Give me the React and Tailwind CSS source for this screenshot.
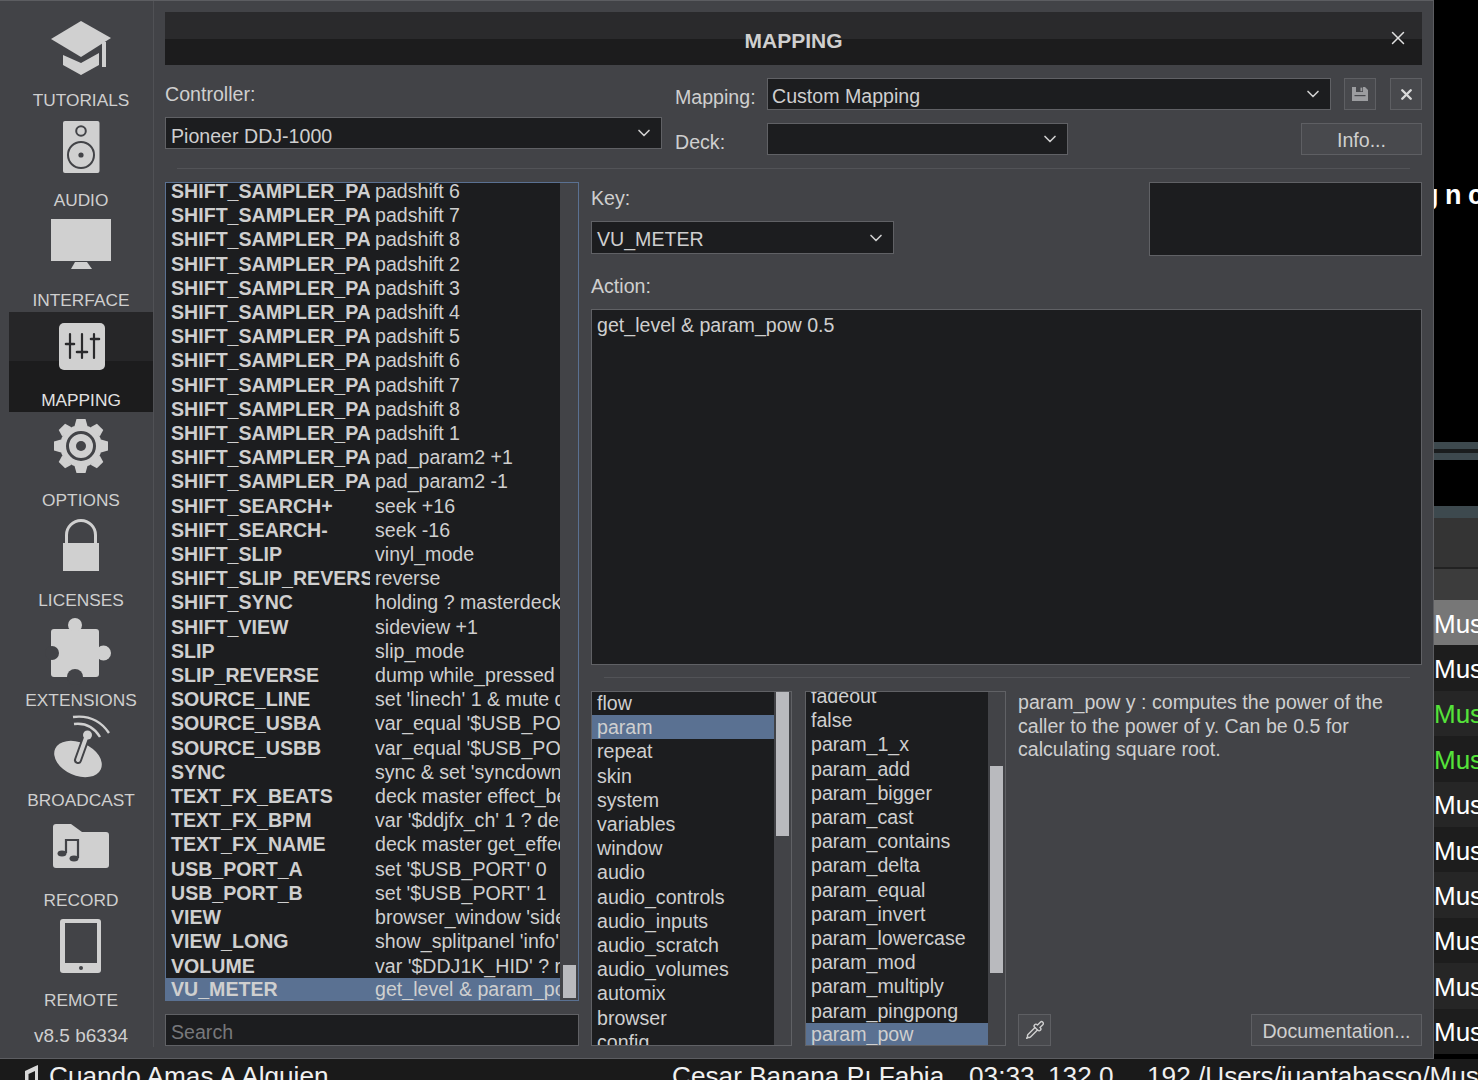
import { ChevronDown, X, Pipette } from "lucide-react";

const FONT = "font-['Liberation_Sans',Arial,sans-serif]";

const mappingRows = [
  ["SHIFT_SAMPLER_PAD", "padshift 6"],
  ["SHIFT_SAMPLER_PAD", "padshift 7"],
  ["SHIFT_SAMPLER_PAD", "padshift 8"],
  ["SHIFT_SAMPLER_PAD", "padshift 2"],
  ["SHIFT_SAMPLER_PAD", "padshift 3"],
  ["SHIFT_SAMPLER_PAD", "padshift 4"],
  ["SHIFT_SAMPLER_PAD", "padshift 5"],
  ["SHIFT_SAMPLER_PAD", "padshift 6"],
  ["SHIFT_SAMPLER_PAD", "padshift 7"],
  ["SHIFT_SAMPLER_PAD", "padshift 8"],
  ["SHIFT_SAMPLER_PAD", "padshift 1"],
  ["SHIFT_SAMPLER_PAD", "pad_param2 +1"],
  ["SHIFT_SAMPLER_PAD", "pad_param2 -1"],
  ["SHIFT_SEARCH+", "seek +16"],
  ["SHIFT_SEARCH-", "seek -16"],
  ["SHIFT_SLIP", "vinyl_mode"],
  ["SHIFT_SLIP_REVERSE", "reverse"],
  ["SHIFT_SYNC", "holding ? masterdeck"],
  ["SHIFT_VIEW", "sideview +1"],
  ["SLIP", "slip_mode"],
  ["SLIP_REVERSE", "dump while_pressed"],
  ["SOURCE_LINE", "set 'linech' 1 & mute deck"],
  ["SOURCE_USBA", "var_equal '$USB_PORT'"],
  ["SOURCE_USBB", "var_equal '$USB_PORT'"],
  ["SYNC", "sync & set 'syncdown'"],
  ["TEXT_FX_BEATS", "deck master effect_beats"],
  ["TEXT_FX_BPM", "var '$ddjfx_ch' 1 ? deck"],
  ["TEXT_FX_NAME", "deck master get_effect"],
  ["USB_PORT_A", "set '$USB_PORT' 0"],
  ["USB_PORT_B", "set '$USB_PORT' 1"],
  ["VIEW", "browser_window 'sideview'"],
  ["VIEW_LONG", "show_splitpanel 'info'"],
  ["VOLUME", "var '$DDJ1K_HID' ? rest"],
  ["VU_METER", "get_level & param_pow 0.5"],
];

const categories = ["flow", "param", "repeat", "skin", "system", "variables", "window", "audio", "audio_controls", "audio_inputs", "audio_scratch", "audio_volumes", "automix", "browser", "config"];
const verbs = ["fadeout", "false", "param_1_x", "param_add", "param_bigger", "param_cast", "param_contains", "param_delta", "param_equal", "param_invert", "param_lowercase", "param_mod", "param_multiply", "param_pingpong", "param_pow"];

const L = "#d0d0d0";
const D = "#424347";

const GearTeeth = () =>
  [0, 45, 90, 135, 180, 225, 270, 315].map((a) => (
    <path key={a} d="M74.5 14 L76.5 7 H85.5 L87.5 14 Z" fill={L} transform={`rotate(${a} 81 34)`} />
  ));

const sideItems = [
  {
    label: "TUTORIALS",
    icon: (
      <g fill={L}>
        <path d="M51 27 L81 9 L111 26 L81 45 Z" />
        <path d="M63 43 L81 51 L99 41 V53 L81 63 L63 53 Z" />
        <rect x="102" y="30" width="4" height="25" />
      </g>
    ),
  },
  {
    label: "AUDIO",
    icon: (
      <g>
        <rect x="63" y="9" width="36.5" height="52" rx="2" fill={L} />
        <circle cx="81" cy="19" r="4.8" fill="none" stroke={D} strokeWidth="2" />
        <circle cx="81" cy="43" r="13" fill="none" stroke={D} strokeWidth="2" />
        <circle cx="81" cy="43" r="2.6" fill={D} />
      </g>
    ),
  },
  {
    label: "INTERFACE",
    icon: (
      <g fill={L}>
        <rect x="51" y="7" width="60" height="42" />
        <path d="M75 50 H87 L92 57 H71 Z" />
      </g>
    ),
  },
  {
    label: "MAPPING",
    active: true,
    icon: (
      <g>
        <rect x="59" y="11" width="46" height="47" rx="5" fill={L} />
        <g stroke="#2a2a2c" strokeWidth="2.2" strokeLinecap="round">
          <path d="M70 22 V46 M82 22 V46 M94 22 V46" />
          <path d="M66 32 H74 M77 40 H87 M91 27 H99" strokeWidth="2.6" />
        </g>
      </g>
    ),
  },
  {
    label: "OPTIONS",
    icon: (
      <g>
        <GearTeeth />
        <circle cx="81" cy="34" r="21" fill={L} />
        <circle cx="81" cy="34" r="13.5" fill="none" stroke={D} strokeWidth="3" />
        <circle cx="81" cy="34" r="5" fill={D} />
      </g>
    ),
  },
  {
    label: "LICENSES",
    icon: (
      <g>
        <path d="M66.5 32 V23 a14.5 14.5 0 0 1 29 0 V32" fill="none" stroke={L} strokeWidth="3" />
        <rect x="63" y="31" width="36" height="28" fill={L} />
      </g>
    ),
  },
  {
    label: "EXTENSIONS",
    icon: (
      <g>
        <rect x="51" y="17" width="48" height="48" rx="3" fill={L} />
        <circle cx="75" cy="13" r="7" fill={L} />
        <circle cx="103.5" cy="41" r="7.5" fill={L} />
        <circle cx="52" cy="41" r="7" fill={D} />
        <circle cx="75" cy="65" r="8" fill={D} />
      </g>
    ),
  },
  {
    label: "BROADCAST",
    icon: (
      <g>
        <ellipse cx="78" cy="47" rx="25" ry="16.5" fill={L} transform="rotate(24 78 47)" />
        <path d="M78 48 L87 23" stroke={D} strokeWidth="8" strokeLinecap="round" />
        <path d="M78 48 L87 23" stroke={L} strokeWidth="4" strokeLinecap="round" />
        <circle cx="87.5" cy="23" r="4.5" fill={L} />
        <path d="M73 5 Q96 2 109 21" fill="none" stroke={L} strokeWidth="2.4" />
        <path d="M74 12 Q91 10 100 25" fill="none" stroke={L} strokeWidth="2.4" />
      </g>
    ),
  },
  {
    label: "RECORD",
    icon: (
      <g>
        <path d="M53 15 q0 -3 3 -3 H71 l11 8 H106 q3 0 3 3 V53 q0 3 -3 3 H56 q-3 0 -3 -3 Z" fill={L} />
        <path d="M66 41 V28 H78 V46" fill="none" stroke={D} strokeWidth="2.2" />
        <ellipse cx="62" cy="41.5" rx="4.5" ry="3" fill={D} />
        <ellipse cx="74" cy="46.5" rx="4.5" ry="3" fill={D} />
      </g>
    ),
  },
  {
    label: "REMOTE",
    icon: (
      <g>
        <rect x="60" y="7" width="41" height="54" rx="3" fill={L} />
        <rect x="65" y="11" width="32" height="40" fill={D} />
        <circle cx="81" cy="56" r="2" fill={D} />
      </g>
    ),
  },
];

const SideItem = ({ item }) => (
  <div className={`ml-[9px] flex h-[100px] w-[144px] shrink-0 flex-col items-center ${item.active ? "bg-[linear-gradient(#262628_0,#262628_49%,#1c1c1d_49%)]" : ""}`}>
    <svg width="144" height="76" viewBox="9 0 144 76" className="shrink-0 overflow-visible">
      {item.icon}
    </svg>
    <span className={`h-[22px] text-[17.3px] leading-[24px] ${item.active ? "text-[#e2e2e2]" : "text-[#cfcfcf]"}`}>{item.label}</span>
  </div>
);

const Select = ({ value, className = "", textClass = "pt-[5px]" }) => (
  <div className={`flex h-[32px] items-center justify-between border border-[#606165] bg-[#1c1d1f] pl-[5px] pr-[7px] text-[19.6px] text-[#cfcfcf] ${className}`}>
    <span className={textClass}>{value}</span>
    <ChevronDown size={20} strokeWidth={2} className="text-[#cfcfcf]" />
  </div>
);

const ToolButton = ({ children, className = "" }) => (
  <button className={`flex h-[32px] items-center justify-center border border-[#5e5f63] bg-[#48494d] text-[#cfcfcf] ${className}`}>{children}</button>
);

const FieldLabel = ({ children, className = "" }) => (
  <div className={`h-[32px] text-[19.6px] leading-[32px] text-[#cfcfcf] ${className}`}>{children}</div>
);

const WordList = ({ rows, selected, offset, thumb, className = "" }) => (
  <div className={`flex h-[355px] w-[201px] overflow-hidden border border-[#606165] bg-[#424347] ${className}`}>
    <div className="flex-1 overflow-hidden bg-[#1c1d1f] text-[19.6px] text-[#cfcfcf]">
      <div className={offset}>
        {rows.map((r) => (
          <div key={r} className={`h-[24.21px] pl-[5px] ${r === "param_pow" ? "leading-[22px]" : "leading-[24.21px]"} ${r === selected ? "bg-[#5a7192]" : ""}`}>
            {r}
          </div>
        ))}
      </div>
    </div>
    <div className="w-[17px] shrink-0 px-[2px]">
      <div className={`bg-[#b9babe] ${thumb}`} />
    </div>
  </div>
);

const sideRows = [
  "bg-[#777777] text-white",
  "bg-[#1d1d1d] text-white",
  "bg-[#262626] text-[#55e33a]",
  "bg-[#1d1d1d] text-[#55e33a]",
  "bg-[#262626] text-white",
  "bg-[#1d1d1d] text-white",
  "bg-[#262626] text-white",
  "bg-[#1d1d1d] text-white",
  "bg-[#262626] text-white",
  "bg-[#1d1d1d] text-white",
];

export default function App() {
  return (
    <div className={`${FONT} flex h-[1080px] w-[1478px] flex-col overflow-hidden bg-black`}>
      <div className="flex h-[1059px] shrink-0">
        {/* dialog */}
        <div className="flex h-full w-[1434px] shrink-0 border-y border-r border-[#5c5d61] bg-[#424347]">
          {/* left menu */}
          <div className="flex h-[1046px] w-[154px] shrink-0 flex-col border-r border-[#505155] pt-[11px]">
            {sideItems.map((item) => (
              <SideItem key={item.label} item={item} />
            ))}
            <div className="ml-[9px] w-[144px] pt-[13px] text-center text-[19px] leading-[22px] text-[#cfcfcf]">v8.5 b6334</div>
          </div>

          <div className="flex min-w-0 flex-1 flex-col pl-[11px] pr-[11px] pt-[11px]">
            {/* title */}
            <div className="relative flex h-[53px] shrink-0 items-center justify-center bg-[linear-gradient(#2a2a2c_0,#2a2a2c_51%,#1c1c1d_51%)] pt-[5px]">
              <span className="text-[21px] font-bold text-[#cfcfcf]">MAPPING</span>
              <X size={22} strokeWidth={1.6} className="absolute right-[13px] top-[15px] text-[#e0e0e0]" />
            </div>

            {/* controller + mapping */}
            <div className="flex gap-[13px] pt-[13px]">
              <div className="w-[497px] shrink-0">
                <FieldLabel>Controller:</FieldLabel>
                <Select value="Pioneer DDJ-1000" className="mt-[7px]" textClass="pt-[8px]" />
              </div>
              <div className="flex-1">
                <div className="flex items-center">
                  <FieldLabel className="w-[92px] pt-[3px]">Mapping:</FieldLabel>
                  <Select value="Custom Mapping" className="flex-1 !pl-[4px]" />
                  <ToolButton className="ml-[13px] w-[32px]">
                    <svg width="18" height="18" viewBox="0 0 18 18" fill="#9c9da0">
                      <path d="M1 2 H14 L17 5 V16 H1 Z" />
                      <rect x="5" y="2" width="7" height="5" fill="#48494d" />
                      <rect x="9.5" y="2.6" width="1.8" height="3.6" fill="#9c9da0" />
                      <rect x="3.5" y="10" width="11" height="1.2" fill="#48494d" />
                    </svg>
                  </ToolButton>
                  <ToolButton className="ml-[14px] w-[32px]">
                    <X size={17} strokeWidth={3.4} className="text-[#d8d8d8]" />
                  </ToolButton>
                </div>
                <div className="mt-[13px] flex items-center">
                  <FieldLabel className="w-[92px] pt-[3px]">Deck:</FieldLabel>
                  <Select value="" className="w-[301px]" />
                  <ToolButton className="ml-auto w-[121px] pt-[3px] text-[19.6px]">Info...</ToolButton>
                </div>
              </div>
            </div>

            <div className="mx-[12px] mt-[13px] h-px shrink-0 bg-[#525357]" />

            {/* body */}
            <div className="mt-[13px] flex gap-[12px]">
              <div className="w-[414px] shrink-0">
                <div className="flex h-[819px] overflow-hidden border border-[#5a7192] bg-[#424347]">
                  <div className="min-w-0 flex-1 overflow-hidden bg-[#1c1d1f] text-[19.6px] text-[#cfcfcf]">
                    <div className="-mt-[4px]">
                      {mappingRows.map(([key, action], i) => (
                        <div key={i} className={`flex h-[24.21px] ${key === "VU_METER" ? "bg-[#5a7192] leading-[22px]" : "leading-[24.21px]"}`}>
                          <span className="mr-[5px] w-[204px] shrink-0 overflow-hidden whitespace-nowrap pl-[5px] font-bold">{key}</span>
                          <span className="overflow-hidden whitespace-nowrap">{action}</span>
                        </div>
                      ))}
                    </div>
                  </div>
                  <div className="flex w-[18px] shrink-0 flex-col justify-end pb-[2px] pl-[3px] pr-[2px]">
                    <div className="h-[33px] bg-[#b9babe]" />
                  </div>
                </div>
                <div className="mt-[13px] flex h-[32px] items-center border border-[#606165] bg-[#1c1d1f] pl-[5px] pt-[6px] text-[19.6px] text-[#77787b]">Search</div>
              </div>

              <div className="min-w-0 flex-1">
                <div className="flex h-[74px] justify-between">
                  <div className="w-[303px]">
                    <FieldLabel>Key:</FieldLabel>
                    <Select value="VU_METER" className="mt-[7px] !h-[33px]" />
                  </div>
                  <div className="h-[74px] w-[273px] border border-[#606165] bg-[#1c1d1f]" />
                </div>

                <FieldLabel className="mt-[14px]">Action:</FieldLabel>
                <div className="mt-[7px] h-[356px] border border-[#606165] bg-[#1c1d1f] px-[5px] pt-[3px] text-[19.6px] leading-[24px] text-[#cfcfcf]">get_level &amp; param_pow 0.5</div>

                <div className="ml-[13px] mr-[12px] mt-[12px] h-px bg-[#525357]" />

                <div className="mt-[13px] flex h-[355px]">
                  <WordList rows={categories} selected="param" offset="-mt-px" thumb="h-[144px]" />
                  <WordList rows={verbs} selected="param_pow" offset="-mt-[8px]" thumb="mt-[74px] h-[207px]" className="ml-[13px]" />
                  <div className="ml-[12px] flex min-w-0 flex-1 flex-col justify-between">
                    <p className="w-[390px] text-[19.6px] leading-[23.6px] text-[#cfcfcf]">param_pow y : computes the power of the caller to the power of y. Can be 0.5 for calculating square root.</p>
                    <div className="flex items-center justify-between">
                      <ToolButton className="w-[33px]">
                        <Pipette size={20} strokeWidth={1.7} className="text-[#cfcfcf]" />
                      </ToolButton>
                      <ToolButton className="w-[171px] pt-[3px] text-[19.6px]">Documentation...</ToolButton>
                    </div>
                  </div>
                </div>
              </div>
            </div>
          </div>
        </div>

        {/* what's behind the dialog */}
        <div className="flex min-w-0 flex-1 flex-col overflow-hidden bg-black">
          <div className="-ml-[12px] mt-[181px] h-[261px] shrink-0 whitespace-nowrap text-[27px] font-bold leading-[28px] tracking-[6.5px] text-white">gnc</div>
          <div className="h-[7px] shrink-0 bg-[#3d494e]" />
          <div className="h-[4px] shrink-0 bg-[#1a1d1e]" />
          <div className="h-[7px] shrink-0 bg-[#3d494e]" />
          <div className="h-[46px] shrink-0" />
          <div className="h-[12px] shrink-0 bg-[#3d494e]" />
          <div className="h-[49px] shrink-0 bg-[#343434]" />
          <div className="h-[2px] shrink-0 bg-[#222222]" />
          <div className="h-[31px] shrink-0 bg-[#3c3c3c]" />
          {sideRows.map((c, i) => (
            <div key={i} className={`flex h-[45.4px] shrink-0 items-center whitespace-nowrap pt-[3px] text-[26px] ${c}`}>
              Music
            </div>
          ))}
        </div>
      </div>

      {/* now playing bar */}
      <div className="flex h-[21px] shrink-0 overflow-hidden whitespace-nowrap bg-[#1a1a1a] pl-[22px] text-[26.2px] leading-[34px] text-[#f0f0f0]">
        <svg width="18" height="21" viewBox="0 0 18 21" className="mt-[6px] shrink-0" fill="#d8d8d8">
          <path d="M12.5 1.5 L16 0 V16 H13 V6 L6.5 9 V18 H3 V6 Z" />
        </svg>
        <span className="ml-[9px] w-[623px] shrink-0">Cuando Amas A Alguien</span>
        <span className="w-[297px] shrink-0">Cesar Banana Pı Fabia</span>
        <span className="w-[79px] shrink-0">03:33</span>
        <span className="w-[99px] shrink-0">132.0</span>
        <span>192 /Users/juantabasso/Music</span>
      </div>
    </div>
  );
}
